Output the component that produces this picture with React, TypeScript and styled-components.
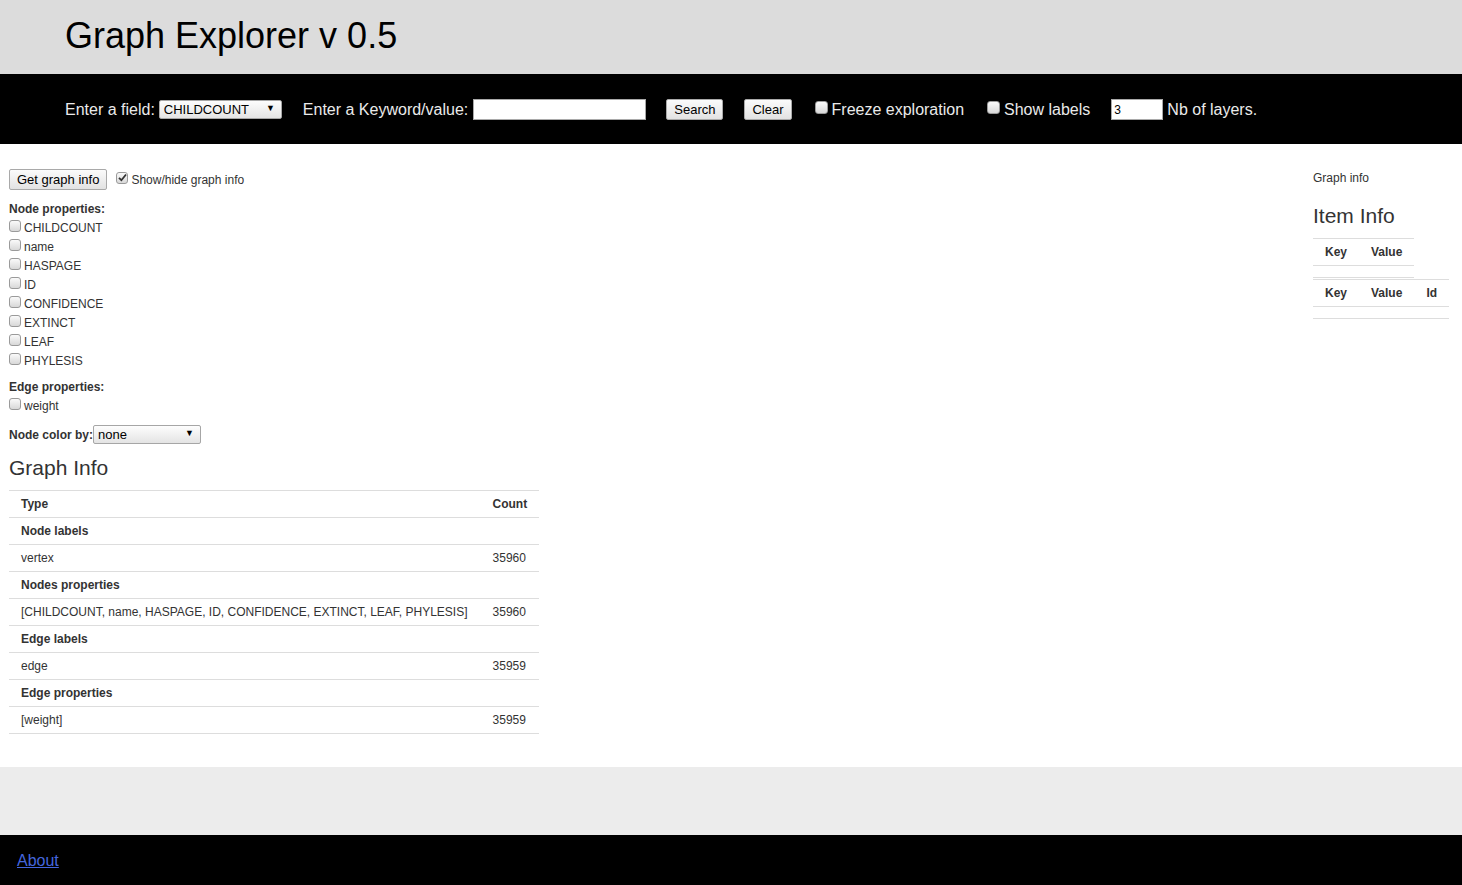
import React from "react";
import styled, { createGlobalStyle } from "styled-components";

const GlobalStyle = createGlobalStyle`
  html, body { margin: 0; padding: 0; background: #fff; }
  body { font-family: "Liberation Sans", Arial, Helvetica, sans-serif; color: #333; }
  * { box-sizing: border-box; }
`;

const Page = styled.div`
  display: flex;
  flex-direction: column;
  min-height: 885px;
`;

const Header = styled.header`
  height: 74px;
  background: #dcdcdc;
  display: flex;
  align-items: center;
  padding-left: 65px;
`;

const Title = styled.h1`
  margin: 0;
  font-size: 36px;
  font-weight: normal;
  color: #000;
  line-height: 40px;
  padding-bottom: 2px;
`;

const Toolbar = styled.div`
  height: 70px;
  background: #000;
  display: flex;
  align-items: center;
  padding-left: 65px;
  padding-top: 1px;
`;

const Group = styled.div<{ $ml?: number; $gap?: number }>`
  display: flex;
  align-items: center;
  gap: ${(p) => p.$gap ?? 4}px;
  margin-left: ${(p) => p.$ml ?? 0}px;
`;

const BarLabel = styled.span`
  font-size: 16px;
  color: #eaeaea;
  line-height: 20px;
`;

const SelectBox = styled.div<{ $w: number }>`
  width: ${(p) => p.$w}px;
  height: 19px;
  display: flex;
  align-items: center;
  justify-content: space-between;
  padding: 0 6px 0 4px;
  border: 1px solid #a6a6a6;
  border-radius: 2px;
  background: linear-gradient(#fdfdfd, #e4e4e4);
  font-size: 13px;
  font-weight: normal;
  color: #000;
`;

const Arrow = styled.span`
  font-size: 9px;
  color: #000;
  line-height: 1;
  margin-top: -2px;
`;

const TextInput = styled.div<{ $w: number }>`
  width: ${(p) => p.$w}px;
  height: 21px;
  background: #fff;
  border: 1px solid #a9a9a9;
  font-size: 12px;
  color: #000;
  display: flex;
  align-items: center;
  padding-left: 2px;
`;

const Button = styled.button<{ $ml?: number }>`
  height: 21px;
  margin: 0 0 0 ${(p) => p.$ml ?? 0}px;
  padding: 0 7px;
  font-family: inherit;
  font-size: 13px;
  line-height: 19px;
  color: #000;
  border: 1px solid #a9a9a9;
  border-radius: 2px;
  background: linear-gradient(#fbfbfb, #e2e2e2);
`;

const CheckBox = styled.span<{ $dark?: boolean }>`
  display: inline-flex;
  align-items: center;
  justify-content: center;
  width: ${(p) => (p.$dark ? 13 : 12)}px;
  height: ${(p) => (p.$dark ? 13 : 12)}px;
  flex: none;
  border: 1px solid #9a9a9a;
  border-radius: 3px;
  background: linear-gradient(#fafafa, #d8d8d8);
  margin-top: -4px;
`;

const CheckRow = styled.label<{ $ml?: number; $gap?: number }>`
  display: flex;
  align-items: center;
  gap: ${(p) => p.$gap ?? 3}px;
  margin-left: ${(p) => p.$ml ?? 0}px;
`;

const Main = styled.main`
  display: flex;
  background: #fff;
  padding-top: 25px;
  padding-bottom: 33px;
`;

const LeftCol = styled.div`
  flex: 1;
  padding-left: 9px;
  display: flex;
  flex-direction: column;
  align-items: flex-start;
`;

const RightCol = styled.div`
  width: 149px;
  display: flex;
  flex-direction: column;
  align-items: flex-start;
`;

const TopRow = styled.div`
  display: flex;
  align-items: center;
  gap: 9px;
  height: 21px;
`;

const SmallText = styled.span<{ $pt?: number }>`
  font-size: 12px;
  color: #333;
  line-height: 19px;
  padding-top: ${(p) => p.$pt ?? 0}px;
`;

const SectionTitle = styled.div<{ $mt: number }>`
  font-size: 12px;
  font-weight: bold;
  color: #333;
  line-height: 18px;
  margin-top: ${(p) => p.$mt}px;
`;

const PropRow = styled.label`
  display: flex;
  align-items: center;
  gap: 3px;
  height: 19px;
  font-size: 12px;
  color: #333;
  padding-top: 1px;
`;

const ColorRow = styled.div`
  display: flex;
  align-items: center;
  margin-top: 10px;
  font-size: 12px;
  font-weight: bold;
  color: #333;
`;

const Heading = styled.h2<{ $mt: number }>`
  margin: ${(p) => p.$mt}px 0 0 0;
  font-size: 21px;
  font-weight: normal;
  color: #333;
  line-height: 24px;
`;

const InfoTable = styled.table<{ $mt: number }>`
  border-collapse: collapse;
  margin-top: ${(p) => p.$mt}px;
  font-size: 12px;
  color: #333;
`;

const Row = styled.tr`
  border-top: 1px solid #ddd;
  &:last-child { border-bottom: 1px solid #ddd; }
`;

const Cell = styled.td<{ $bold?: boolean; $pl?: number }>`
  padding: 4px 12px 4px ${(p) => p.$pl ?? 12}px;
  line-height: 18px;
  text-align: left;
  white-space: nowrap;
  font-weight: ${(p) => (p.$bold ? "bold" : "normal")};
`;

const EmptyCell = styled.td`
  height: 12px;
  padding: 0;
`;

const GrayBand = styled.div`
  height: 68px;
  background: #ececec;
`;

const Footer = styled.footer`
  height: 50px;
  background: #000;
  display: flex;
  align-items: center;
  padding-left: 17px;
  padding-top: 2px;
`;

const AboutLink = styled.a`
  font-size: 16px;
  color: #4466dd;
  text-decoration: underline;
`;

const Tick = () => (
  <svg width="9" height="9" viewBox="0 0 9 9">
    <path d="M1 4.8 L3.4 7.2 L8 1.5" stroke="#333" strokeWidth="1.8" fill="none" />
  </svg>
);

const nodeProps = ["CHILDCOUNT", "name", "HASPAGE", "ID", "CONFIDENCE", "EXTINCT", "LEAF", "PHYLESIS"];

const graphRows: { type: string; count?: string; bold?: boolean }[] = [
  { type: "Node labels", bold: true },
  { type: "vertex", count: "35960" },
  { type: "Nodes properties", bold: true },
  { type: "[CHILDCOUNT, name, HASPAGE, ID, CONFIDENCE, EXTINCT, LEAF, PHYLESIS]", count: "35960" },
  { type: "Edge labels", bold: true },
  { type: "edge", count: "35959" },
  { type: "Edge properties", bold: true },
  { type: "[weight]", count: "35959" },
];

export default function App() {
  return (
    <Page>
      <GlobalStyle />
      <Header>
        <Title>Graph Explorer v 0.5</Title>
      </Header>
      <Toolbar>
        <Group>
          <BarLabel>Enter a field:</BarLabel>
          <SelectBox $w={123}>
            <span>CHILDCOUNT</span>
            <Arrow>▼</Arrow>
          </SelectBox>
        </Group>
        <Group $ml={21} $gap={5}>
          <BarLabel>Enter a Keyword/value:</BarLabel>
          <TextInput $w={173} />
        </Group>
        <Button $ml={20}>Search</Button>
        <Button $ml={21}>Clear</Button>
        <CheckRow $ml={23} $gap={4}>
          <CheckBox $dark />
          <BarLabel>Freeze exploration</BarLabel>
        </CheckRow>
        <CheckRow $ml={23} $gap={4}>
          <CheckBox $dark />
          <BarLabel>Show labels</BarLabel>
        </CheckRow>
        <Group $ml={21}>
          <TextInput $w={52}>3</TextInput>
          <BarLabel>Nb of layers.</BarLabel>
        </Group>
      </Toolbar>
      <Main>
        <LeftCol>
          <TopRow>
            <Button>Get graph info</Button>
            <CheckRow>
              <CheckBox>
                <Tick />
              </CheckBox>
              <SmallText $pt={2}>Show/hide graph info</SmallText>
            </CheckRow>
          </TopRow>
          <SectionTitle $mt={10}>Node properties:</SectionTitle>
          {nodeProps.map((p) => (
            <PropRow key={p}>
              <CheckBox />
              {p}
            </PropRow>
          ))}
          <SectionTitle $mt={8}>Edge properties:</SectionTitle>
          <PropRow>
            <CheckBox />
            weight
          </PropRow>
          <ColorRow>
            Node color by:
            <SelectBox $w={108}>
              <span>none</span>
              <Arrow>▼</Arrow>
            </SelectBox>
          </ColorRow>
          <Heading $mt={12}>Graph Info</Heading>
          <InfoTable $mt={10}>
            <tbody>
              <Row>
                <Cell $bold>Type</Cell>
                <Cell $bold $pl={13}>Count</Cell>
              </Row>
              {graphRows.map((r) => (
                <Row key={r.type}>
                  <Cell $bold={r.bold}>{r.type}</Cell>
                  <Cell $pl={13}>{r.count ?? ""}</Cell>
                </Row>
              ))}
            </tbody>
          </InfoTable>
        </LeftCol>
        <RightCol>
          <SmallText>Graph info</SmallText>
          <Heading $mt={16}>Item Info</Heading>
          <InfoTable $mt={10}>
            <tbody>
              <Row>
                <Cell $bold>Key</Cell>
                <Cell $bold>Value</Cell>
              </Row>
              <Row>
                <EmptyCell colSpan={2} />
              </Row>
            </tbody>
          </InfoTable>
          <InfoTable $mt={1}>
            <tbody>
              <Row>
                <Cell $bold>Key</Cell>
                <Cell $bold>Value</Cell>
                <Cell $bold>Id</Cell>
              </Row>
              <Row>
                <EmptyCell colSpan={3} />
              </Row>
            </tbody>
          </InfoTable>
        </RightCol>
      </Main>
      <GrayBand />
      <Footer>
        <AboutLink href="#">About</AboutLink>
      </Footer>
    </Page>
  );
}
